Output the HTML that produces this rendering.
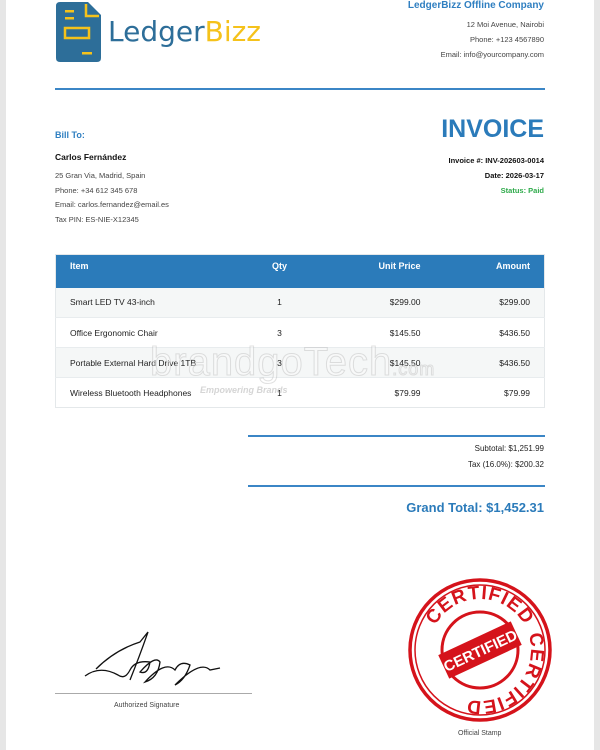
<!DOCTYPE html>
<html><head><meta charset="utf-8"><style>
*{margin:0;padding:0;box-sizing:border-box}
body{width:600px;height:750px;background:#e6e6e6;font-family:"Liberation Sans",sans-serif;position:relative;overflow:hidden}
.page{position:absolute;left:6px;top:0;width:588px;height:750px;background:#fff}
.a{position:absolute;white-space:nowrap}
.r{text-align:right}
.s{font-size:7.5px;color:#444}
.blue{color:#2f7fc1}
td{font-size:8.5px;color:#222}
</style></head><body><div class="page"></div>
<svg class="a" style="left:56px;top:2px" width="46" height="60" viewBox="0 0 46 60">
<path d="M4 0H32L45 13V56Q45 60 41 60H4Q0 60 0 56V4Q0 0 4 0Z" fill="#2d6e99"/>
<path d="M30 2V14H43" fill="none" stroke="#f5c21b" stroke-width="2.5"/>
<rect x="9" y="8" width="9" height="2.5" fill="#f5c21b"/><rect x="9" y="15" width="9" height="2.5" fill="#f5c21b"/>
<rect x="9" y="26" width="24" height="10" fill="none" stroke="#f5c21b" stroke-width="2.5"/>
<rect x="26" y="50" width="10" height="2.5" fill="#f5c21b"/></svg>
<div class="a" style="left:108px;top:15px;font-size:28px;font-family:'DejaVu Sans',sans-serif;color:#2d6e99">Ledger<span style="color:#f5c21b">Bizz</span></div>
<div class="a r blue" style="right:56px;top:0px;font-size:10px;font-weight:bold">LedgerBizz Offline Company</div>
<div class="a r s" style="right:56px;top:20px">12 Moi Avenue, Nairobi</div>
<div class="a r s" style="right:56px;top:35px">Phone: +123 4567890</div>
<div class="a r s" style="right:56px;top:50px">Email: info@yourcompany.com</div>
<div class="a" style="left:55px;top:88px;width:490px;height:2px;background:#3b86c6"></div>
<div class="a blue" style="left:55px;top:130px;font-size:9px;font-weight:bold">Bill To:</div>
<div class="a" style="left:55px;top:152px;font-size:8.5px;font-weight:bold;color:#111">Carlos Fernández</div>
<div class="a s" style="left:55px;top:171px">25 Gran Via, Madrid, Spain</div>
<div class="a s" style="left:55px;top:186px">Phone: +34 612 345 678</div>
<div class="a s" style="left:55px;top:200px">Email: carlos.fernandez@email.es</div>
<div class="a s" style="left:55px;top:215px">Tax PIN: ES-NIE-X12345</div>
<div class="a r blue" style="right:56px;top:115px;font-size:25px;font-weight:bold;color:#2b7bba">INVOICE</div>
<div class="a r" style="right:56px;top:156px;font-size:7.5px;font-weight:bold;color:#111">Invoice #: INV-202603-0014</div>
<div class="a r" style="right:56px;top:171px;font-size:7.5px;font-weight:bold;color:#111">Date: 2026-03-17</div>
<div class="a r" style="right:56px;top:186px;font-size:7.5px;font-weight:bold;color:#2eaa4a">Status: Paid</div>
<table class="a" style="left:55px;top:254px;width:490px;border-collapse:collapse;border:1px solid #e4e8ea">
<tr style="background:#2b7bba;height:33px"><td style="color:#fff;font-weight:bold;font-size:9px;padding-left:14px;vertical-align:top;padding-top:6px">Item</td><td style="color:#fff;font-weight:bold;font-size:9px;text-align:center;vertical-align:top;padding-top:6px;width:70px">Qty</td><td style="color:#fff;font-weight:bold;font-size:9px;text-align:right;vertical-align:top;padding-top:6px;width:110px;padding-right:4px">Unit Price</td><td style="color:#fff;font-weight:bold;font-size:9px;text-align:right;vertical-align:top;padding-top:6px;width:120px;padding-right:14px">Amount</td></tr>
<tr style="background:#f5f7f7;height:30px;border-bottom:1px solid #e8ecee"><td style="padding-left:14px">Smart LED TV 43-inch</td><td style="text-align:center">1</td><td class="r" style="padding-right:4px">$299.00</td><td class="r" style="padding-right:14px">$299.00</td></tr>
<tr style="height:30px;border-bottom:1px solid #e8ecee"><td style="padding-left:14px">Office Ergonomic Chair</td><td style="text-align:center">3</td><td class="r" style="padding-right:4px">$145.50</td><td class="r" style="padding-right:14px">$436.50</td></tr>
<tr style="background:#f5f7f7;height:30px;border-bottom:1px solid #e8ecee"><td style="padding-left:14px">Portable External Hard Drive 1TB</td><td style="text-align:center">3</td><td class="r" style="padding-right:4px">$145.50</td><td class="r" style="padding-right:14px">$436.50</td></tr>
<tr style="height:30px"><td style="padding-left:14px">Wireless Bluetooth Headphones</td><td style="text-align:center">1</td><td class="r" style="padding-right:4px">$79.99</td><td class="r" style="padding-right:14px">$79.99</td></tr>
</table>
<div class="a" style="left:150px;top:340px;font-size:40px;color:rgba(255,255,255,0.3);-webkit-text-stroke:1px rgba(170,170,170,0.35);letter-spacing:1px">brandgoTech<span style="font-size:18px">.com</span></div>
<div class="a" style="left:200px;top:385px;font-size:9px;font-style:italic;font-weight:bold;color:rgba(150,150,150,0.4)">Empowering Brands</div>
<div class="a" style="left:248px;top:435px;width:297px;height:2px;background:#3b86c6"></div>
<div class="a r" style="right:56px;top:444px;font-size:8px;color:#222">Subtotal: $1,251.99</div>
<div class="a r" style="right:56px;top:460px;font-size:8px;color:#222">Tax (16.0%): $200.32</div>
<div class="a" style="left:248px;top:485px;width:297px;height:2px;background:#3b86c6"></div>
<div class="a r" style="right:56px;top:500px;font-size:13px;font-weight:bold;color:#2b7bba">Grand Total: $1,452.31</div>
<svg class="a" style="left:80px;top:620px" width="150" height="70" viewBox="0 0 150 70">
<path d="M16 49Q35 30 60 22L68 12Q60 35 50 60M5 56Q20 45 38 55Q45 60 50 50Q55 40 70 42Q68 55 60 52Q75 35 80 42Q78 58 65 62Q85 40 95 50Q100 40 110 45Q105 60 95 65Q120 40 130 50L140 48" fill="none" stroke="#111" stroke-width="1.3"/></svg>
<div class="a" style="left:55px;top:693px;width:197px;height:1px;background:#aaa"></div>
<div class="a" style="left:114px;top:702px;font-size:7px;color:#444">Authorized Signature</div>
<svg class="a" style="left:408px;top:578px" width="144" height="144" viewBox="-72 -72 144 144">
<defs><path id="c1" d="M-51 0A51 51 0 1 1 51 0A51 51 0 1 1 -51 0"/></defs>
<circle r="70" fill="none" stroke="#d5131b" stroke-width="3.5"/>
<circle r="65" fill="none" stroke="#d5131b" stroke-width="1.5"/>
<circle r="38" fill="none" stroke="#d5131b" stroke-width="3"/>
<text font-family="Liberation Sans" font-weight="bold" font-size="19" fill="#d5131b" letter-spacing="1"><textPath href="#c1" startOffset="25%" text-anchor="middle">CERTIFIED</textPath></text>
<text font-family="Liberation Sans" font-weight="bold" font-size="19" fill="#d5131b" letter-spacing="1"><textPath href="#c1" startOffset="62%" text-anchor="middle">CERTIFIED</textPath></text>
<g transform="rotate(-25)"><rect x="-40" y="-13" width="80" height="26" fill="#d5131b"/><text y="6" text-anchor="middle" font-family="Liberation Sans" font-weight="bold" font-size="15" fill="#fff">CERTIFIED</text></g>
</svg>
<div class="a" style="left:458px;top:730px;font-size:7px;color:#444">Official Stamp</div>
</body></html>
